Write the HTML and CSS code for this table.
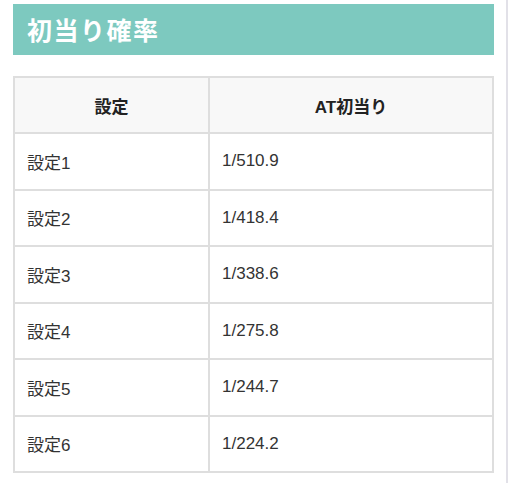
FILE: index.html
```html
<!DOCTYPE html>
<html lang="ja">
<head>
<meta charset="utf-8">
<link rel="stylesheet" href="styles.css">
</head>
<body>
<div class="page">
  <main class="content">
    <h2 class="title">初当り確率</h2>
    <table class="rates">
      <thead>
        <tr><th class="c1">設定</th><th class="c2">AT初当り</th></tr>
      </thead>
      <tbody>
        <tr><td>設定1</td><td>1/510.9</td></tr>
        <tr><td>設定2</td><td>1/418.4</td></tr>
        <tr><td>設定3</td><td>1/338.6</td></tr>
        <tr><td>設定4</td><td>1/275.8</td></tr>
        <tr><td>設定5</td><td>1/244.7</td></tr>
        <tr><td>設定6</td><td>1/224.2</td></tr>
      </tbody>
    </table>
  </main>
  <div class="edge"></div>
</div>
</body>
</html>
```

FILE: styles.css
```css
html, body {
  margin: 0;
  padding: 0;
  background: #fff;
}
body {
  font-family: "Liberation Sans", "Noto Sans CJK JP", sans-serif;
  color: #333;
}
.page {
  display: flex;
  height: 483px;
  overflow: hidden;
}
.content {
  width: 481px;
  padding: 4px 0 0 13px;
}
.edge {
  width: 2px;
  margin-left: 12px;
  background: #e2e1e8;
  height: 100%;
}
.title {
  margin: 0;
  height: 51px;
  box-sizing: border-box;
  background: #7dc9bf;
  color: #fff;
  font-family: "Noto Sans CJK JP", sans-serif;
  font-weight: 700;
  font-size: 25px;
  line-height: 51px;
  padding-left: 14px;
  letter-spacing: 1.5px;
}
.rates {
  margin-top: 21px;
  width: 481px;
  border-collapse: collapse;
  font-size: 17px;
}
.rates th, .rates td {
  border: 2px solid #dedede;
  height: 56px;
  box-sizing: border-box;
  padding: 0 12px;
  vertical-align: middle;
}
.rates td {
  height: 56.5px;
  text-align: left;
}
.rates th {
  background: #f8f8f8;
  font-weight: 700;
  text-align: center;
  color: #222;
}
.c1 { width: 195px; }
```
